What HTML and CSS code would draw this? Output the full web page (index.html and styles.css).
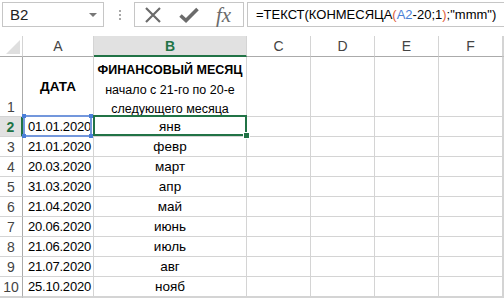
FILE: index.html
```html
<!DOCTYPE html>
<html lang="ru">
<head>
    <meta charset="UTF-8">
    <title>КОНМЕСЯЦА</title>
    <link rel="stylesheet" href="styles.css">
</head>
<body>
    <div class="formula-bar">
        <div class="name-box">
            <span>B2</span>
            <span class="drop-arrow"></span>
        </div>
        <div class="grip">
            <span></span><span></span><span></span>
        </div>
        <div class="bar-buttons">
            <svg class="icon" width="18" height="18" viewBox="0 0 18 18">
                <path d="M2 2 L16 16 M16 2 L2 16" stroke="#6b6b6b" stroke-width="2.2" fill="none"/>
            </svg>
            <svg class="icon" width="20" height="18" viewBox="0 0 20 18">
                <path d="M1.5 9.5 L7 14.5 L18.5 3" stroke="#6b6b6b" stroke-width="3.6" fill="none"/>
            </svg>
            <span class="fx">fx</span>
        </div>
        <div class="formula">=ТЕКСТ(КОНМЕСЯЦА<span class="paren">(</span><span class="ref">A2</span>-20;1<span class="paren">)</span>;"mmm")</div>
    </div>

    <div class="sheet">
        <div class="corner"><span class="corner-tri"></span></div>
        <div class="col-head">A</div>
        <div class="col-head is-active">B</div>
        <div class="col-head">C</div>
        <div class="col-head">D</div>
        <div class="col-head">E</div>
        <div class="col-head">F</div>
        <div class="col-head"></div>

        <div class="row-head tall">1</div>
        <div class="cell title">ДАТА</div>
        <div class="cell title-lines">
            <b>ФИНАНСОВЫЙ МЕСЯЦ</b>
            <span>начало с 21-го по 20-е</span>
            <span>следующего месяца</span>
        </div>
        <div class="cell"></div><div class="cell"></div><div class="cell"></div><div class="cell"></div><div class="cell"></div>

        <div class="row-head is-active">2</div>
        <div class="cell date ref-cell">01.01.2020</div>
        <div class="cell month active-cell">янв</div>
        <div class="cell"></div><div class="cell"></div><div class="cell"></div><div class="cell"></div><div class="cell"></div>

        <div class="row-head">3</div>
        <div class="cell date">21.01.2020</div>
        <div class="cell month">февр</div>
        <div class="cell"></div><div class="cell"></div><div class="cell"></div><div class="cell"></div><div class="cell"></div>

        <div class="row-head">4</div>
        <div class="cell date">20.03.2020</div>
        <div class="cell month">март</div>
        <div class="cell"></div><div class="cell"></div><div class="cell"></div><div class="cell"></div><div class="cell"></div>

        <div class="row-head">5</div>
        <div class="cell date">31.03.2020</div>
        <div class="cell month">апр</div>
        <div class="cell"></div><div class="cell"></div><div class="cell"></div><div class="cell"></div><div class="cell"></div>

        <div class="row-head">6</div>
        <div class="cell date">21.04.2020</div>
        <div class="cell month">май</div>
        <div class="cell"></div><div class="cell"></div><div class="cell"></div><div class="cell"></div><div class="cell"></div>

        <div class="row-head">7</div>
        <div class="cell date">20.06.2020</div>
        <div class="cell month">июнь</div>
        <div class="cell"></div><div class="cell"></div><div class="cell"></div><div class="cell"></div><div class="cell"></div>

        <div class="row-head">8</div>
        <div class="cell date">21.06.2020</div>
        <div class="cell month">июль</div>
        <div class="cell"></div><div class="cell"></div><div class="cell"></div><div class="cell"></div><div class="cell"></div>

        <div class="row-head">9</div>
        <div class="cell date">21.07.2020</div>
        <div class="cell month">авг</div>
        <div class="cell"></div><div class="cell"></div><div class="cell"></div><div class="cell"></div><div class="cell"></div>

        <div class="row-head">10</div>
        <div class="cell date">25.10.2020</div>
        <div class="cell month">нояб</div>
        <div class="cell"></div><div class="cell"></div><div class="cell"></div><div class="cell"></div><div class="cell"></div>

        <div class="row-head"></div>
        <div class="cell"></div><div class="cell"></div>
        <div class="cell"></div><div class="cell"></div><div class="cell"></div><div class="cell"></div><div class="cell"></div>
    </div>
</body>
</html>
```

FILE: styles.css
```css
body {
    margin: 0;
    width: 504px;
    height: 298px;
    overflow: hidden;
    background-color: white;
    font-family: "Liberation Sans", Arial, sans-serif;
    color: #000;
}

/* formula bar */
.formula-bar {
    display: flex;
    align-items: flex-start;
    height: 36px;
    padding-top: 2px;
    box-sizing: border-box;
}

.formula-bar > div {
    flex-shrink: 0;
}

.name-box {
    display: flex;
    align-items: center;
    justify-content: space-between;
    width: 102px;
    height: 25px;
    margin-left: 2px;
    padding: 0 6px 0 7px;
    box-sizing: border-box;
    border: 1px solid #c6c6c6;
    font-size: 15px;
    color: #222;
}

.drop-arrow {
    width: 0;
    height: 0;
    border-left: 4px solid transparent;
    border-right: 4px solid transparent;
    border-top: 4px solid #777;
}

.grip {
    display: flex;
    flex-direction: column;
    gap: 2px;
    width: 30px;
    padding: 8px 0 0 15px;
    box-sizing: border-box;
}

.grip span {
    width: 2px;
    height: 2px;
    background-color: #a8a8a8;
}

.bar-buttons {
    display: flex;
    align-items: center;
    width: 110px;
    height: 25px;
    box-sizing: border-box;
    border: 1px solid #c6c6c6;
    padding-left: 9px;
}

.icon {
    margin-right: 17px;
}

.fx {
    font-family: "Liberation Serif", "Times New Roman", serif;
    font-style: italic;
    font-size: 21px;
    color: #6b6b6b;
    line-height: 20px;
}

.formula-bar .formula {
    flex: 1 1 auto;
    min-width: 0;
    overflow: hidden;
    height: 25px;
    margin-left: 3px;
    padding-left: 8px;
    box-sizing: border-box;
    border: 1px solid #c6c6c6;
    border-right: none;
    font-size: 13px;
    line-height: 23px;
    white-space: nowrap;
}

.formula .paren {
    color: #e0603a;
}

.formula .ref {
    color: #4a7fd6;
}

/* worksheet grid */
.sheet {
    display: grid;
    grid-template-columns: 23px 71px 153px 64px 64px 64px 64px 1px;
    grid-template-rows: 21px 60px repeat(9, 20px) 1px;
    font-size: 13px;
}

.sheet > div {
    box-sizing: border-box;
    border-right: 1px solid #d4d4d4;
    border-bottom: 1px solid #d4d4d4;
    white-space: nowrap;
}

.corner {
    position: relative;
    border-bottom-color: #ababab !important;
}

.corner-tri {
    position: absolute;
    right: 2px;
    bottom: 2px;
    width: 0;
    height: 0;
    border-left: 14px solid transparent;
    border-bottom: 14px solid #dfdfdf;
}

.col-head {
    display: flex;
    align-items: center;
    justify-content: center;
    color: #444;
    font-size: 14px;
    border-bottom-color: #ababab !important;
}

.col-head.is-active {
    background-color: #e1e1e1;
    color: #217346;
    font-weight: bold;
    border-bottom: 2px solid #217346 !important;
}

.row-head {
    display: flex;
    align-items: center;
    justify-content: center;
    color: #444;
    font-size: 14px;
    border-right-color: #ababab !important;
}

.row-head.tall {
    align-items: flex-end;
    padding-bottom: 1px;
}

.row-head.is-active {
    background-color: #e1e1e1;
    color: #217346;
    font-weight: bold;
    border-right: 2px solid #217346 !important;
}

.cell {
    display: flex;
    align-items: center;
    font-size: 13.5px;
}

.cell.title {
    justify-content: center;
    font-weight: bold;
}

.title-lines {
    display: flex;
    flex-direction: column;
    align-items: center;
    padding-top: 4px;
    line-height: 19.5px;
    font-size: 12.5px;
}

.title-lines b {
    font-size: 12.5px;
}

.cell.date {
    justify-content: flex-end;
    padding-right: 2px;
    font-size: 13px;
    letter-spacing: -0.2px;
}

.cell.month {
    justify-content: center;
}

/* selection overlays */
.ref-cell,
.active-cell {
    position: relative;
}

.ref-cell::after {
    content: "";
    position: absolute;
    left: 0;
    right: 1px;
    top: -2px;
    bottom: -1px;
    border: 2px solid #7397dc;
}

.ref-cell::before {
    content: "";
    position: absolute;
    left: -1px;
    right: 0;
    top: -3px;
    bottom: -2px;
    background:
        linear-gradient(#4a7ed8, #4a7ed8) left top / 4px 4px no-repeat,
        linear-gradient(#4a7ed8, #4a7ed8) right top / 4px 4px no-repeat,
        linear-gradient(#4a7ed8, #4a7ed8) left bottom / 4px 4px no-repeat,
        linear-gradient(#4a7ed8, #4a7ed8) right bottom / 4px 4px no-repeat;
    z-index: 1;
}

.active-cell::after {
    content: "";
    position: absolute;
    left: -1px;
    right: -1px;
    top: -2px;
    bottom: 0;
    border: 2px solid #217346;
}

.active-cell::before {
    content: "";
    position: absolute;
    right: -4px;
    bottom: -3px;
    width: 5px;
    height: 5px;
    background-color: #217346;
    border: 1px solid white;
    z-index: 2;
}
```
